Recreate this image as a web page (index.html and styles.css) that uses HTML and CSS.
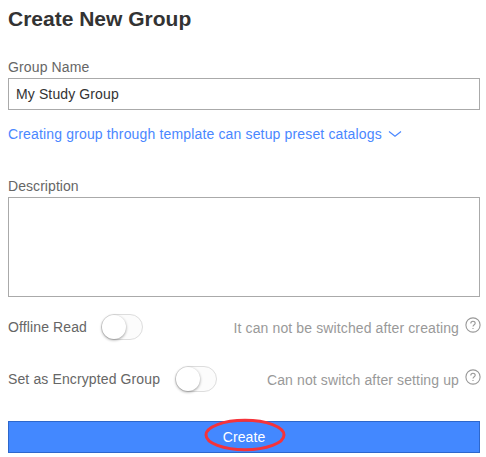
FILE: index.html
```html
<!DOCTYPE html>
<html lang="en">
<head>
<meta charset="utf-8">
<title>Create New Group</title>
<link rel="stylesheet" href="styles.css">
</head>
<body>
<main class="form">
  <h1 class="title">Create New Group</h1>
  <label class="label" for="name">Group Name</label>
  <input class="input" id="name" type="text" value="My Study Group">
  <a class="template-link">Creating group through template can setup preset catalogs
    <svg class="chevron" width="14" height="8" viewBox="0 0 14 8"><path d="M1 1.5 L7 6.2 L13 1.5"/></svg>
  </a>
  <label class="label label-desc" for="desc">Description</label>
  <textarea class="textarea" id="desc"></textarea>
  <div class="row row-offline">
    <span class="row-label">Offline Read</span>
    <span class="switch"><span class="knob"></span></span>
    <span class="hint">It can not be switched after creating</span>
    <svg class="help" width="16" height="16" viewBox="0 0 16 16"><circle cx="8" cy="8" r="7.1"/><path d="M5.8 6.4 C5.8 3.5 10.2 3.6 10.2 6.2 C10.2 7.7 8 7.8 8 9.6 M8 10.9 V12.1"/></svg>
  </div>
  <div class="row row-encrypted">
    <span class="row-label">Set as Encrypted Group</span>
    <span class="switch"><span class="knob"></span></span>
    <span class="hint">Can not switch after setting up</span>
    <svg class="help" width="16" height="16" viewBox="0 0 16 16"><circle cx="8" cy="8" r="7.1"/><path d="M5.8 6.4 C5.8 3.5 10.2 3.6 10.2 6.2 C10.2 7.7 8 7.8 8 9.6 M8 10.9 V12.1"/></svg>
  </div>
  <button class="create" type="button">Create
    <svg class="ring" width="82" height="34" viewBox="0 0 82 34"><ellipse cx="41" cy="17" rx="39" ry="14.7"/></svg>
  </button>
</main>
</body>
</html>
```
FILE: styles.css
```css
* { box-sizing: border-box; }
body {
  margin: 0;
  background: #fff;
  font: 14px/20px "Liberation Sans", Arial, sans-serif;
  letter-spacing: .155px;
  color: #666;
}
.form {
  display: flex;
  flex-direction: column;
  width: 472px;
  margin-left: 8px;
  padding-top: 4px;
}
.title {
  margin: 0 0 26px;
  font-size: 21px;
  line-height: 30px;
  letter-spacing: 0;
  color: #333;
}
.label { height: 18px; line-height: 14px; letter-spacing: .13px; }
.input {
  height: 32px;
  padding: 0 7px;
  border: 1px solid #aaa;
  font: inherit;
  letter-spacing: .12px;
  color: #333;
}
.template-link {
  display: flex;
  align-items: center;
  gap: 6px;
  margin-top: 14px;
  color: #4a87ff;
}
.chevron { fill: none; stroke: #4a87ff; stroke-width: 1.2; }
.label-desc { margin-top: 35px; letter-spacing: .06px; }
.textarea {
  height: 100px;
  border: 1px solid #aaa;
  resize: none;
}
.row { display: flex; align-items: center; height: 28px; }
.row-label { letter-spacing: .12px; }
.row-offline { margin-top: 16px; }
.row-encrypted { margin-top: 24px; }
.switch {
  width: 42px;
  height: 26px;
  margin-left: 14px;
  border: 1px solid #ddd;
  border-radius: 13px;
  background: #fcfcfc;
}
.row-encrypted .switch { margin-left: 15px; }
.knob {
  display: block;
  width: 24px;
  height: 24px;
  border-radius: 50%;
  background: #fff;
  box-shadow: 0 1px 3px rgba(0, 0, 0, .4);
}
.hint { margin-left: auto; padding-top: 2px; letter-spacing: .12px; color: #999; }
.help {
  margin: -4px -1px 0 6px;
  fill: none;
  stroke: #999;
  stroke-width: 1.1;
}
.create {
  position: relative;
  height: 32px;
  margin-top: 28px;
  padding: 0;
  border: 1px solid #2d67cc;
  background: #4388ff;
  font: inherit;
  letter-spacing: .1px;
  color: #fff;
}
.ring {
  position: absolute;
  left: 195px;
  top: -4px;
  fill: none;
  stroke: #f5333a;
  stroke-width: 3;
}
```
